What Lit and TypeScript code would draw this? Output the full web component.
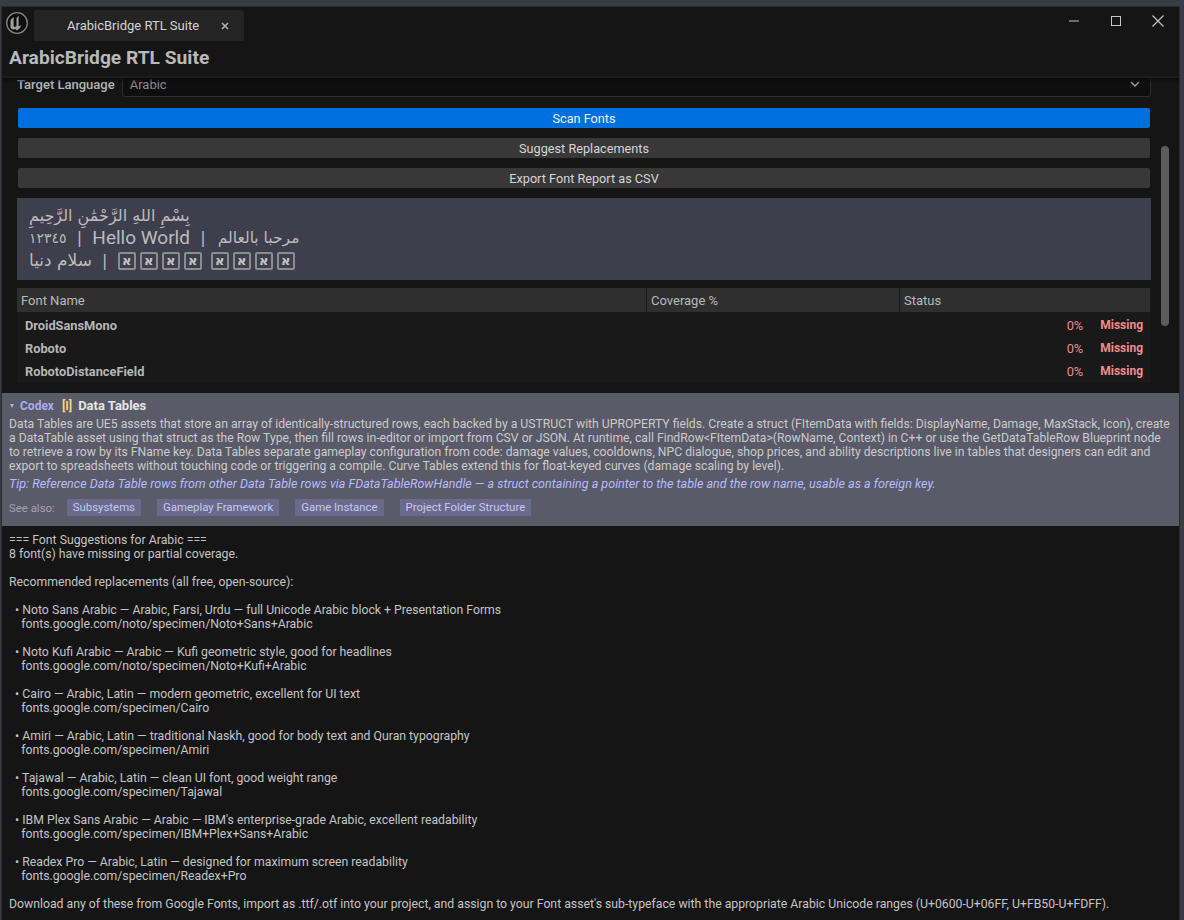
import { LitElement, css, html } from 'lit'
import { customElement } from 'lit/decorators.js'

const FONTS = ['DroidSansMono', 'Roboto', 'RobotoDistanceField']

const SUGGESTIONS = [
  ['Noto Sans Arabic — Arabic, Farsi, Urdu — full Unicode Arabic block + Presentation Forms', 'fonts.google.com/noto/specimen/Noto+Sans+Arabic'],
  ['Noto Kufi Arabic — Arabic — Kufi geometric style, good for headlines', 'fonts.google.com/noto/specimen/Noto+Kufi+Arabic'],
  ['Cairo — Arabic, Latin — modern geometric, excellent for UI text', 'fonts.google.com/specimen/Cairo'],
  ['Amiri — Arabic, Latin — traditional Naskh, good for body text and Quran typography', 'fonts.google.com/specimen/Amiri'],
  ['Tajawal — Arabic, Latin — clean UI font, good weight range', 'fonts.google.com/specimen/Tajawal'],
  ["IBM Plex Sans Arabic — Arabic — IBM's enterprise-grade Arabic, excellent readability", 'fonts.google.com/specimen/IBM+Plex+Sans+Arabic'],
  ['Readex Pro — Arabic, Latin — designed for maximum screen readability', 'fonts.google.com/specimen/Readex+Pro'],
]

const SEE_ALSO = ['Subsystems', 'Gameplay Framework', 'Game Instance', 'Project Folder Structure']

@customElement('app-root')
export class AppRoot extends LitElement {
  static styles = css`
    :host {
      display: block;
      height: 920px;
      overflow: hidden;
      background: #3b3b46;
      font-family: Roboto, "Noto Sans", sans-serif;
      font-size: 12.25px;
      color: #c0c0c0;
    }
    .window {
      height: 914px;
      margin: 6px 4px 0 1px;
      background: #151515;
      border: 1px solid #2b2b2b;
      border-bottom: none;
      overflow: hidden;
    }
    .titlebar {
      display: flex;
      align-items: flex-start;
      height: 34px;
      padding: 3px 0 0 3px;
    }
    .logo {
      width: 24px;
      height: 24px;
      margin-top: 1px;
    }
    .tab {
      display: flex;
      align-items: center;
      width: 210px;
      height: 31px;
      margin-left: 5px;
      padding-left: 33px;
      box-sizing: border-box;
      background: #242424;
      border-radius: 3px 3px 0 0;
      font-size: 13px;
      color: #d4d4d4;
    }
    .tab-x {
      margin-left: 21px;
      width: 10px;
      height: 10px;
    }
    .controls {
      display: flex;
      margin-left: auto;
      gap: 28px;
      padding: 4px 14px 0 0;
    }
    .controls svg {
      width: 14px;
      height: 14px;
    }
    h1 {
      margin: 0;
      padding: 1px 0 0 7px;
      height: 31px;
      box-sizing: border-box;
      font-size: 19.2px;
      line-height: 26px;
      font-weight: 700;
      color: #b9b9b9;
    }
    .head-rule {
      height: 2px;
      background: #1c1c1c;
      margin-top: 1px;
    }
    .scroll {
      position: relative;
      height: 310px;
      overflow: hidden;
      padding: 0 28px 0 15px;
      background: #151515;
    }
    .scroll::before {
      content: "";
      position: absolute;
      inset: 0 0 auto 0;
      height: 5px;
      background: linear-gradient(rgba(10, 10, 10, 0.85), rgba(10, 10, 10, 0));
    }
    .scroll-inner {
      margin-top: -5px;
    }
    .lang {
      display: flex;
      align-items: center;
      gap: 7px;
      height: 24px;
      font-weight: 500;
      font-size: 13px;
      color: #b5b5b5;
    }
    .lang-label {
      margin-bottom: 2px;
    }
    .select {
      flex: 1;
      display: flex;
      align-items: center;
      justify-content: space-between;
      height: 24px;
      box-sizing: border-box;
      padding: 0 10px 2px 7px;
      background: #0e0e0e;
      border: 1px solid #2f2f2f;
      border-radius: 3px;
      font-weight: 400;
      color: #8c8c8c;
    }
    .select svg {
      width: 10px;
      height: 7px;
    }
    .btn {
      display: flex;
      align-items: center;
      justify-content: center;
      height: 20px;
      margin: 10px 1px 0;
      background: #383838;
      border-radius: 2px;
      font-size: 12.7px;
      color: #d6d6d6;
    }
    .btn.primary {
      margin-top: 11px;
      background: #0070e0;
      color: #f0f0f0;
    }
    .preview {
      margin-top: 10px;
      height: 82px;
      box-sizing: border-box;
      padding: 7px 12px;
      background: #3e3e4c;
      font-family: "DejaVu Sans", Roboto, sans-serif;
      font-size: 16px;
      line-height: 22px;
      color: #bcbcbc;
    }
    .pline {
      height: 22px;
      white-space: pre;
    }
    .preview .latin {
      font-family: Roboto, sans-serif;
      font-size: 19px;
      vertical-align: -1px;
    }
    .iso {
      unicode-bidi: isolate;
    }
    .digits {
      font-size: 14px;
    }
    .mid {
      font-size: 15.5px;
      margin-left: 2px;
    }
    .salam {
      font-size: 17px;
    }
    .tofu {
      display: inline-block;
      width: 18px;
      height: 18px;
      box-sizing: border-box;
      margin-right: 4px;
      border: 2px solid #8d8d8d;
      border-radius: 2px;
      font-size: 13px;
      font-weight: 700;
      line-height: 14px;
      text-align: center;
      vertical-align: 1px;
      color: #c4c4c4;
    }
    .gap {
      display: inline-block;
      width: 5px;
    }
    .table {
      margin-top: 8px;
    }
    .thead {
      display: grid;
      grid-template-columns: 630px 253px 1fr;
      height: 24px;
      background: #2f2f2f;
      font-size: 13px;
      color: #b9b9b9;
    }
    .thead div {
      display: flex;
      align-items: center;
      padding-left: 4px;
      border-right: 1px solid #1a1a1a;
    }
    .tbody {
      padding-top: 2px;
      background: #191919;
    }
    .tr {
      display: flex;
      align-items: center;
      height: 23px;
      padding: 0 8px;
      font-weight: 700;
      font-size: 12.8px;
      color: #b6b6b6;
    }
    .pct {
      margin-left: auto;
      font-weight: 400;
      color: #e88c8c;
    }
    .status {
      margin: 0 0 2px 17px;
      font-size: 12px;
      color: #f08c8c;
    }
    .thumb {
      position: absolute;
      top: 68px;
      right: 10px;
      width: 8px;
      height: 180px;
      border-radius: 4px;
      background: #5c5c5c;
    }
    .codex {
      margin-top: 5px;
      height: 133px;
      box-sizing: border-box;
      padding: 4px 8px 0 7px;
      background: #5a5a68;
      color: #cbcbcb;
      line-height: 14px;
    }
    .codex-head {
      display: flex;
      align-items: center;
      height: 17px;
      font-weight: 700;
      font-size: 13px;
      color: #e6e6e6;
    }
    .tri {
      width: 0;
      height: 0;
      margin: 0 6px 0 1px;
      border-left: 2.5px solid transparent;
      border-right: 2.5px solid transparent;
      border-top: 4px solid #b4b4c0;
    }
    .codex-name {
      font-size: 12px;
      color: #a9adf0;
      margin-right: 8px;
    }
    .badge {
      font-size: 12px;
      color: #f2d878;
      margin-right: 6px;
    }
    .body {
      margin-top: 3px;
      font-size: 12.2px;
    }
    .tip {
      margin-top: 4px;
      font-style: italic;
      font-size: 12.55px;
      color: #b6bbff;
    }
    .see {
      display: flex;
      align-items: center;
      gap: 16px;
      margin-top: 8px;
      font-size: 11.4px;
      color: #a4a4ae;
    }
    .see-label {
      margin-right: -4px;
    }
    .chip {
      height: 17px;
      line-height: 16px;
      padding: 0 6px;
      background: #6a6a8c;
      color: #c8c8f0;
    }
    .report {
      padding: 7px 8px 0 7px;
      line-height: 14px;
      color: #c4c4c4;
      white-space: pre-wrap;
    }
  `

  render() {
    return html`
      <div class="window">
        <div class="titlebar">
          <svg class="logo" viewBox="0 0 24 24" fill="none">
            <circle cx="12" cy="12" r="10.3" stroke="#858585" stroke-width="1.3" fill="#0e0e0e" />
            <path d="M5.600 9.600c.6-1.500 1.900-2.700 3.600-3.300-.5.7-.6 1.200-.6 2v6.500c0 1.200 1.700 1.500 2.900.5V7.800c0-.9.9-2 2.500-3-.3.7-.4 1.200-.4 2v8.300c.8.2 1.500 0 2.700-1.100-.5 2.400-2.300 4.600-4.600 5.400l-1.100-1.300c-2.200 1-5.100.2-5.100-2.300V9.300z" fill="#a0a0a0" />
          </svg>
          <div class="tab">
            ArabicBridge RTL Suite
            <svg class="tab-x" viewBox="0 0 10 10"><path d="M2 2l6 6M8 2l-6 6" stroke="#b0b0b0" stroke-width="1.6" /></svg>
          </div>
          <div class="controls">
            <svg viewBox="0 0 14 14"><path d="M2 7h10" stroke="#c8c8c8" stroke-width="1" /></svg>
            <svg viewBox="0 0 14 14" fill="none"><rect x="2.5" y="2.5" width="9" height="9" stroke="#c8c8c8" /></svg>
            <svg viewBox="0 0 14 14"><path d="M1.500 1.500l11 11M12.500 1.500l-11 11" stroke="#c8c8c8" stroke-width="1.100" /></svg>
          </div>
        </div>
        <h1>ArabicBridge RTL Suite</h1>
        <div class="head-rule"></div>
        <div class="scroll">
          <div class="scroll-inner">
            <div class="lang">
              <span class="lang-label">Target Language</span>
              <div class="select">
                Arabic
                <svg viewBox="0 0 10 7" fill="none"><path d="M1 1l4 4 4-4" stroke="#a0a0a0" stroke-width="1.4" /></svg>
              </div>
            </div>
            <div class="btn primary">Scan Fonts</div>
            <div class="btn">Suggest Replacements</div>
            <div class="btn">Export Font Report as CSV</div>
            <div class="preview">
              <div class="pline"><span class="iso" dir="rtl">بِسْمِ اللهِ الرَّحْمَٰنِ الرَّحِيمِ</span></div>
              <div class="pline"><span class="iso digits">١٢٣٤٥</span>  |  <span class="latin">Hello World</span>  |  <span class="iso mid" dir="rtl">مرحبا بالعالم</span></div>
              <div class="pline"><span class="iso salam" dir="rtl">سلام دنيا</span>  |  ${this.tofus(4)}<span class="gap"></span>${this.tofus(4)}</div>
            </div>
            <div class="table">
              <div class="thead">
                <div>Font Name</div>
                <div>Coverage %</div>
                <div>Status</div>
              </div>
              <div class="tbody">
                ${FONTS.map(name => html`
                  <div class="tr">
                    ${name}
                    <span class="pct">0%</span>
                    <span class="status">Missing</span>
                  </div>`)}
              </div>
            </div>
          </div>
          <div class="thumb"></div>
        </div>
        <div class="codex">
          <div class="codex-head">
            <span class="tri"></span>
            <span class="codex-name">Codex</span>
            <span class="badge">[I]</span>
            Data Tables
          </div>
          <div class="body">Data Tables are UE5 assets that store an array of identically-structured rows, each backed by a USTRUCT with UPROPERTY fields. Create a struct (FItemData with fields: DisplayName, Damage, MaxStack, Icon), create a DataTable asset using that struct as the Row Type, then fill rows in-editor or import from CSV or JSON. At runtime, call FindRow&lt;FItemData&gt;(RowName, Context) in C++ or use the GetDataTableRow Blueprint node to retrieve a row by its FName key. Data Tables separate gameplay configuration from code: damage values, cooldowns, NPC dialogue, shop prices, and ability descriptions live in tables that designers can edit and export to spreadsheets without touching code or triggering a compile. Curve Tables extend this for float-keyed curves (damage scaling by level).</div>
          <div class="tip">Tip: Reference Data Table rows from other Data Table rows via FDataTableRowHandle — a struct containing a pointer to the table and the row name, usable as a foreign key.</div>
          <div class="see">
            <span class="see-label">See also:</span>
            ${SEE_ALSO.map(s => html`<span class="chip">${s}</span>`)}
          </div>
        </div>
        <div class="report">${this.reportText()}</div>
      </div>
    `
  }

  tofus(n: number) {
    return Array.from({ length: n }, () => html`<span class="tofu">א</span>`)
  }

  reportText() {
    const list = SUGGESTIONS.map(([a, b]) => `  • ${a}\n    ${b}\n`).join('\n')
    return `=== Font Suggestions for Arabic ===\n8 font(s) have missing or partial coverage.\n\nRecommended replacements (all free, open-source):\n\n${list}\nDownload any of these from Google Fonts, import as .ttf/.otf into your project, and assign to your Font asset's sub-typeface with the appropriate Arabic Unicode ranges (U+0600-U+06FF, U+FB50-U+FDFF).`
  }
}
